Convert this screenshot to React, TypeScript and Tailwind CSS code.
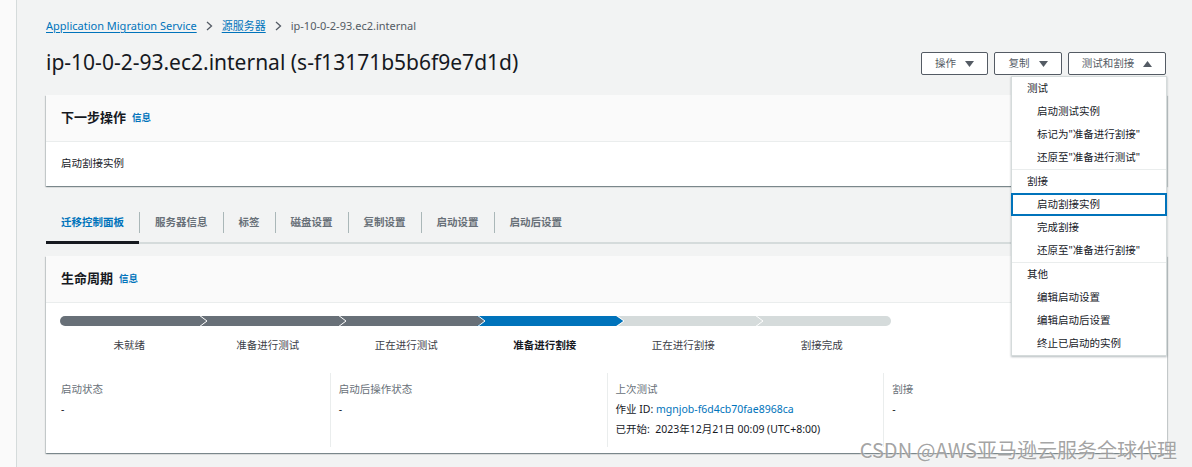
import React from 'react';

const steps = ['未就绪', '准备进行测试', '正在进行测试', '准备进行割接', '正在进行割接', '割接完成'];
const tabs = ['迁移控制面板', '服务器信息', '标签', '磁盘设置', '复制设置', '启动设置', '启动后设置'];

const menu = [
  { group: '测试', items: ['启动测试实例', '标记为"准备进行割接"', '还原至"准备进行测试"'] },
  { group: '割接', items: ['启动割接实例', '完成割接', '还原至"准备进行割接"'] },
  { group: '其他', items: ['编辑启动设置', '编辑启动后设置', '终止已启动的实例'] },
];

function Caret({ up = false }: { up?: boolean }) {
  return (
    <svg width="9" height="6" viewBox="0 0 9 6" className="shrink-0">
      {up ? <polygon points="0,6 9,6 4.5,0" fill="#545b64" /> : <polygon points="0,0 9,0 4.5,6" fill="#545b64" />}
    </svg>
  );
}

function ProgressBar() {
  const b = [0, 139, 278, 417, 556, 695, 831];
  const colors = ['#687078', '#687078', '#687078', '#0073bb', '#d5dbdb', '#d5dbdb'];
  const order = [5, 4, 3, 2, 1, 0];
  return (
    <svg width="831" height="10" viewBox="0 0 831 10" className="block">
      <defs>
        <clipPath id="pb">
          <rect width="831" height="10" rx="5" />
        </clipPath>
      </defs>
      <g clipPath="url(#pb)">
        {order.map((i) => {
          const x0 = b[i];
          const x1 = b[i + 1];
          if (i === 5) return <rect key={i} x={x0} y={0} width={x1 - x0} height={10} fill={colors[i]} />;
          return (
            <g key={i}>
              <polygon points={`${x0},0 ${x1},0 ${x1 + 8},5 ${x1},10 ${x0},10`} fill={colors[i]} />
              <polyline points={`${x1},-1 ${x1 + 8},5 ${x1},11`} fill="none" stroke="#ffffff" strokeWidth="1" />
            </g>
          );
        })}
      </g>
    </svg>
  );
}

const cardShadow =
  'shadow-[0_1px_1px_0_rgba(0,28,36,0.3),1px_1px_1px_0_rgba(0,28,36,0.15),-1px_1px_1px_0_rgba(0,28,36,0.15)]';

export default function App() {
  return (
    <div className="relative flex w-[1192px] h-[467px] overflow-hidden bg-[#f2f3f3] text-[#16191f] font-['Noto_Sans','Noto_Sans_CJK_SC',sans-serif]">
      <div className="w-[17px] shrink-0 bg-[#fafafa] border-r border-[#d5dbdb]" />

      <main className="w-[1121px] ml-[29px] shrink-0">
        {/* breadcrumb */}
        <nav className="mt-[19px] flex items-center h-[14px] text-[11px] leading-[14px]">
          <span className="text-[#0073bb] underline underline-offset-2 decoration-[#0073bb]">Application Migration Service</span>
          <span className="mx-[9px] text-[#545b64]">
            <svg width="7" height="10" viewBox="0 0 7 10">
              <polyline points="1,1 5.5,5 1,9" fill="none" stroke="#545b64" strokeWidth="1.3" />
            </svg>
          </span>
          <span className="text-[#0073bb] underline underline-offset-2 decoration-[#0073bb]">源服务器</span>
          <span className="mx-[9px]">
            <svg width="7" height="10" viewBox="0 0 7 10">
              <polyline points="1,1 5.5,5 1,9" fill="none" stroke="#545b64" strokeWidth="1.3" />
            </svg>
          </span>
          <span className="text-[#545b64]">ip-10-0-2-93.ec2.internal</span>
        </nav>

        {/* header */}
        <div className="mt-[15px] flex items-center justify-between h-[28px]">
          <h1 className="text-[21px] leading-[28px] font-normal text-[#16191f]">ip-10-0-2-93.ec2.internal (s-f13171b5b6f9e7d1d)</h1>
          <div className="relative flex gap-[6px] mt-[3px] mr-[1px]">
            <button className="h-[23px] w-[67px] flex items-center justify-center gap-[9px] border border-[#545b64] rounded-[2px] bg-white text-[10.5px] text-[#545b64]">
              操作 <Caret />
            </button>
            <button className="h-[23px] w-[68px] flex items-center justify-center gap-[9px] border border-[#545b64] rounded-[2px] bg-white text-[10.5px] text-[#545b64]">
              复制 <Caret />
            </button>
            <button className="h-[23px] w-[98px] flex items-center justify-center gap-[9px] border border-[#545b64] rounded-[2px] bg-white text-[10.5px] text-[#545b64]">
              测试和割接 <Caret up />
            </button>

            <div className="absolute right-[-1px] top-[24px] z-10 w-[156px] bg-white border border-[#d5dbdb] shadow-[0_1px_2px_rgba(0,28,36,0.3)] text-[10.5px]">
              {menu.map((g, gi) => (
                <div key={g.group} className={gi > 0 ? 'border-t border-[#eaeded]' : ''}>
                  <div className="h-[23px] flex items-center pl-[15px] text-[#16191f]">{g.group}</div>
                  {g.items.map((it) => (
                    <div
                      key={it}
                      className={
                        it === '启动割接实例'
                          ? 'h-[23px] flex items-center pl-[24px] text-[#16191f] border-2 border-[#0073bb] -mx-px'
                          : 'h-[23px] flex items-center pl-[25px] text-[#16191f]'
                      }
                    >
                      {it}
                    </div>
                  ))}
                </div>
              ))}
            </div>
          </div>
        </div>

        {/* next action card */}
        <section className={`mt-[19px] bg-white ${cardShadow}`}>
          <div className="h-[47px] bg-[#fafafa] border-b border-[#eaeded] flex items-center gap-[6px] px-[15px]">
            <h2 className="text-[13px] font-bold">下一步操作</h2>
            <span className="text-[9.5px] font-bold text-[#0073bb] mt-[1px]">信息</span>
          </div>
          <div className="h-[44px] flex items-center px-[15px] text-[10.5px] text-[#16191f]">启动割接实例</div>
        </section>

        {/* tabs */}
        <div className="mt-[14px] flex h-[44px] border-b-2 border-[#d5dbdb]">
          {tabs.map((t, i) => (
            <React.Fragment key={t}>
              {i > 0 && <div className="w-px h-[21px] bg-[#aab7b8] self-center mt-[2px]" />}
              <div
                className={
                  i === 0
                    ? 'px-[15px] flex items-center text-[10.5px] font-bold text-[#0073bb] border-b-[3px] border-[#16191f] -mb-[2px] pt-[4px]'
                    : 'px-[15px] flex items-center text-[10.5px] font-bold text-[#687078] pt-[3px]'
                }
              >
                {t}
              </div>
            </React.Fragment>
          ))}
        </div>

        {/* lifecycle card */}
        <section className={`mt-[12px] bg-white ${cardShadow}`}>
          <div className="h-[47px] bg-[#fafafa] border-b border-[#eaeded] flex items-center gap-[6px] px-[15px]">
            <h2 className="text-[13px] font-bold">生命周期</h2>
            <span className="text-[9.5px] font-bold text-[#0073bb] mt-[1px]">信息</span>
          </div>
          <div className="pt-[13px] px-[14px]">
            <ProgressBar />
            <div className="mt-[12px] flex w-[831px] text-[10.5px] leading-[14px]">
              {steps.map((s) => (
                <div key={s} className={s === '准备进行割接' ? 'flex-1 text-center font-bold text-[#16191f]' : 'flex-1 text-center text-[#3c4047]'}>
                  {s}
                </div>
              ))}
            </div>
          </div>
          <div className="mt-[21px] mx-[7px] grid grid-cols-4 pb-[6px] text-[10.5px] leading-[20px]">
            <div className="pl-[8px] pt-[6px] pb-[8px]">
              <div className="text-[#687078]">启动状态</div>
              <div>-</div>
            </div>
            <div className="pl-[8px] pt-[6px] pb-[8px] border-l border-[#eaeded]">
              <div className="text-[#687078]">启动后操作状态</div>
              <div>-</div>
            </div>
            <div className="pl-[8px] pt-[6px] pb-[8px] border-l border-[#eaeded]">
              <div className="text-[#687078]">上次测试</div>
              <div>
                作业 ID: <span className="text-[#0073bb]">mgnjob-f6d4cb70fae8968ca</span>
              </div>
              <div>已开始:&nbsp; 2023年12月21日 00:09 (UTC+8:00)</div>
            </div>
            <div className="pl-[8px] pt-[6px] pb-[8px] border-l border-[#eaeded]">
              <div className="text-[#687078]">割接</div>
              <div>-</div>
            </div>
          </div>
        </section>
      </main>

      <div className="absolute right-[15px] bottom-[4px] text-[20px] leading-[26px] text-[#8c8c8c]/80 font-['Noto_Sans_CJK_SC',sans-serif] [text-shadow:0_0_2px_#ffffff]">
        CSDN @AWS亚马逊云服务全球代理
      </div>
    </div>
  );
}
